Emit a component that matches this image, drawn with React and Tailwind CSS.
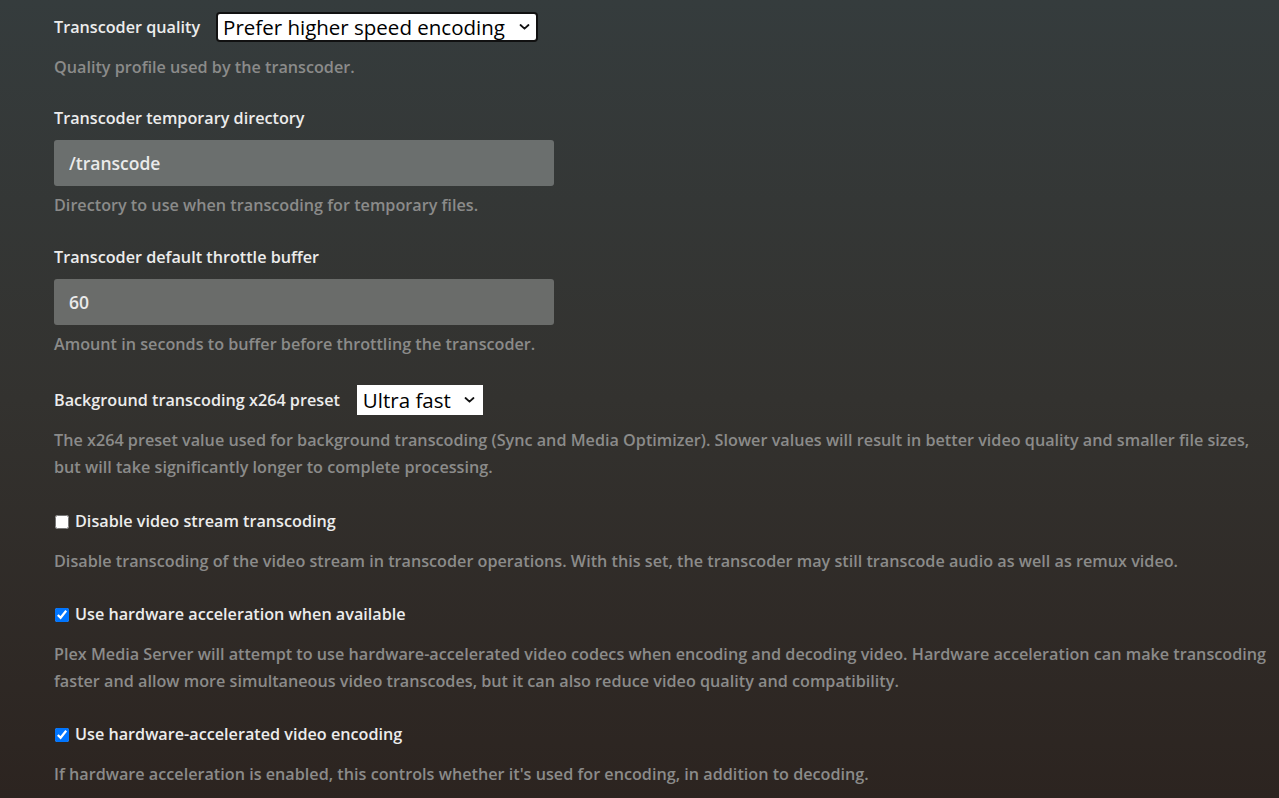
import { useState } from 'react';

function Chevron() {
  return (
    <svg className="pointer-events-none absolute right-[8px] top-1/2 -translate-y-1/2" width="11" height="7" viewBox="0 0 11 7" fill="none">
      <path d="M1.5 1.5 L5.5 5.2 L9.5 1.5" stroke="#111" strokeWidth="1.8" strokeLinecap="round" strokeLinejoin="round" />
    </svg>
  );
}

function Desc({ children, className = '' }) {
  return <p className={`text-[16.2px] leading-[27px] font-semibold text-[#8b8b8a] ${className}`}>{children}</p>;
}

function Label({ children }) {
  return <div className="text-[16.2px] leading-[27px] font-semibold text-[#ececec]">{children}</div>;
}

function CheckRow({ checked, onChange, label }) {
  return (
    <label className="flex items-center text-[16.2px] leading-[27px] font-semibold text-[#ececec]">
      <input
        type="checkbox"
        checked={checked}
        onChange={onChange}
        className="m-0 ml-[1px] mr-[6px] h-[14px] w-[14px] accent-[#0075ff]"
      />
      {label}
    </label>
  );
}

export default function App() {
  const [quality, setQuality] = useState('speed');
  const [preset, setPreset] = useState('ultrafast');
  const [tmpDir, setTmpDir] = useState('/transcode');
  const [buffer, setBuffer] = useState('60');
  const [disableVideo, setDisableVideo] = useState(false);
  const [hwAccel, setHwAccel] = useState(true);
  const [hwEncode, setHwEncode] = useState(true);

  return (
    <div
      className="min-h-screen w-full bg-gradient-to-b from-[#353c3d] via-[#33322f] to-[#2c2420] pl-[54px] pr-[8px] pt-[12px]"
      style={{ fontFamily: '"Open Sans", "Noto Sans", sans-serif' }}
    >
      {/* quality */}
      <div className="flex items-center gap-[16px]">
        <Label>Transcoder quality</Label>
        <div className="relative">
          <select
            value={quality}
            onChange={(e) => setQuality(e.target.value)}
            className="h-[30px] w-[322px] appearance-none rounded-[4px] border-2 border-[#111] bg-white py-0 pl-[5px] text-[20.5px] leading-[26px] text-black outline-none"
          >
            <option value="auto">Automatic</option>
            <option value="speed">Prefer higher speed encoding</option>
            <option value="quality">Prefer higher quality encoding</option>
            <option value="best">Make my CPU hurt</option>
          </select>
          <Chevron />
        </div>
      </div>
      <Desc className="mt-[12px]">Quality profile used by the transcoder.</Desc>

      {/* temp dir */}
      <div className="mt-[24px]">
        <Label>Transcoder temporary directory</Label>
        <input
          value={tmpDir}
          onChange={(e) => setTmpDir(e.target.value)}
          className="mt-[8px] block h-[46px] w-[500px] rounded-[3px] bg-[#6b6f6e] px-[15px] text-[17.5px] font-semibold text-[#eaeaea] outline-none"
        />
        <Desc className="mt-[6px]">Directory to use when transcoding for temporary files.</Desc>
      </div>

      {/* throttle buffer */}
      <div className="mt-[25px]">
        <Label>Transcoder default throttle buffer</Label>
        <input
          value={buffer}
          onChange={(e) => setBuffer(e.target.value)}
          className="mt-[8px] block h-[46px] w-[500px] rounded-[3px] bg-[#6a6c6a] px-[15px] text-[17.5px] font-semibold text-[#eaeaea] outline-none"
        />
        <Desc className="mt-[6px]">Amount in seconds to buffer before throttling the transcoder.</Desc>
      </div>

      {/* x264 preset */}
      <div className="mt-[27px]">
        <div className="flex items-center gap-[17px]">
          <Label>Background transcoding x264 preset</Label>
          <div className="relative">
            <select
              value={preset}
              onChange={(e) => setPreset(e.target.value)}
              className="h-[30px] w-[126px] appearance-none border border-white bg-white py-0 pl-[5px] text-[20.5px] leading-[26px] text-black outline-none"
            >
              <option value="ultrafast">Ultra fast</option>
              <option value="superfast">Super fast</option>
              <option value="veryfast">Very fast</option>
              <option value="faster">Faster</option>
              <option value="fast">Fast</option>
              <option value="medium">Medium</option>
            </select>
            <Chevron />
          </div>
        </div>
        <Desc className="mt-[12px]">
          The x264 preset value used for background transcoding (Sync and Media Optimizer). Slower values will result in better video quality and smaller file sizes, but will take significantly longer to complete processing.
        </Desc>
      </div>

      <div className="mt-[27px]">
        <CheckRow checked={disableVideo} onChange={() => setDisableVideo(!disableVideo)} label="Disable video stream transcoding" />
        <Desc className="mt-[13px]">
          Disable transcoding of the video stream in transcoder operations. With this set, the transcoder may still transcode audio as well as remux video.
        </Desc>
      </div>

      <div className="mt-[26px]">
        <CheckRow checked={hwAccel} onChange={() => setHwAccel(!hwAccel)} label="Use hardware acceleration when available" />
        <Desc className="mt-[13px]">
          Plex Media Server will attempt to use hardware-accelerated video codecs when encoding and decoding video. Hardware acceleration can make transcoding faster and allow more simultaneous video transcodes, but it can also reduce video quality and compatibility.
        </Desc>
      </div>

      <div className="mt-[26px]">
        <CheckRow checked={hwEncode} onChange={() => setHwEncode(!hwEncode)} label="Use hardware-accelerated video encoding" />
        <Desc className="mt-[13px]">
          If hardware acceleration is enabled, this controls whether it's used for encoding, in addition to decoding.
        </Desc>
      </div>
    </div>
  );
}
